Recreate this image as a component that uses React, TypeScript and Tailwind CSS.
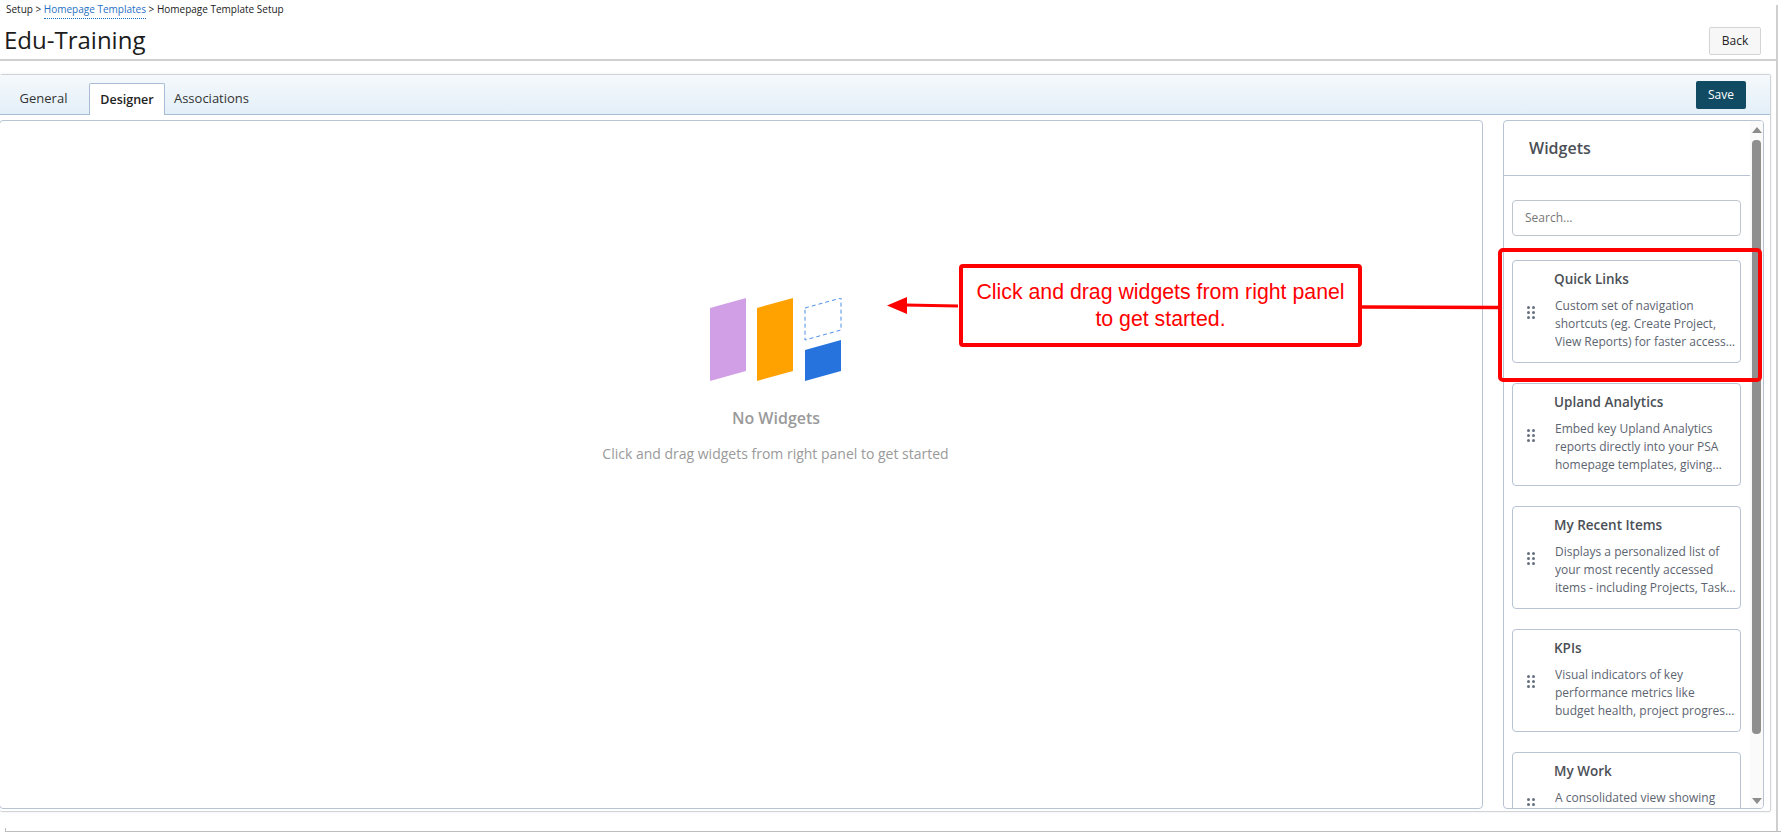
const widgets = [
  {
    title: "Quick Links",
    text: "Custom set of navigation shortcuts (eg. Create Project, View Reports) for faster access to the pages you use most often every day",
  },
  {
    title: "Upland Analytics",
    text: "Embed key Upland Analytics reports directly into your PSA homepage templates, giving users instant access to their data",
  },
  {
    title: "My Recent Items",
    text: "Displays a personalized list of your most recently accessed items - including Projects, Tasks, Issues and other records",
  },
  {
    title: "KPIs",
    text: "Visual indicators of key performance metrics like budget health, project progress and resource utilization over time",
  },
  {
    title: "My Work",
    text: "A consolidated view showing everything assigned to you across your projects and tasks",
  },
];

function DragHandle() {
  return (
    <div className="grid w-[8px] shrink-0 grid-cols-2 gap-x-[2px] gap-y-[2px]">
      {[0, 1, 2, 3, 4, 5].map((i) => (
        <span key={i} className="h-[3px] w-[3px] rounded-full bg-[#66707f]" />
      ))}
    </div>
  );
}

function WidgetCard({ title, text }: { title: string; text: string }) {
  return (
    <div className="flex h-[103px] w-[229px] shrink-0 items-center rounded-[4px] border border-[#b8c4d4] bg-white pl-[14px] pr-[4px]">
      <div className="mt-[2px]">
        <DragHandle />
      </div>
      <div className="ml-[20px] min-w-0 flex-1 self-start pt-[9px]">
        <div className="-ml-px text-[13.5px] leading-[19px] font-semibold text-[#4b4f56]">{title}</div>
        <p className="mt-[8px] line-clamp-3 text-[12px] leading-[18px] text-[#5c6470]">{text}</p>
      </div>
    </div>
  );
}

function EmptyIcon() {
  return (
    <svg width="132" height="84" viewBox="0 0 132 84" className="block">
      <polygon points="0,10 36,0 36,73 0,83" fill="#d09fe6" />
      <polygon points="47,10 83,0 83,73 47,83" fill="#ffa200" />
      <polygon
        points="95,10 131,0 131,32 95,42"
        fill="none"
        stroke="#4f8fe6"
        strokeWidth="1"
        strokeDasharray="4 3"
      />
      <polygon points="95,52 131,42 131,73 95,83" fill="#2673dd" />
    </svg>
  );
}

export default function App() {
  return (
    <div
      className="relative h-[832px] w-[1781px] overflow-hidden bg-white text-[#222]"
      style={{ fontFamily: '"Open Sans", sans-serif' }}
    >
      {/* page frame */}
      <div className="absolute top-[5px] right-[3px] bottom-0 w-[2px] bg-[#cfcfcf]" />
      <div className="absolute bottom-0 left-[5px] h-[4px] w-[1776px] border-b border-l border-[#bdbdbd]" />

      <div className="h-[61px] w-[1776px] border-b-2 border-[#cfcfcf] pr-[15px]">
        <div className="pt-[2px] pl-[6px] text-[10px] leading-[14px] text-[#222]">
          Setup &gt;{" "}
          <span className="border-b border-dotted border-[#1f6fc4] pb-[2px] text-[#1f6fc4]">Homepage Templates</span>{" "}
          &gt; Homepage Template Setup
        </div>
        <div className="flex items-start justify-between">
          <h1 className="mt-[7px] pl-[4px] text-[24px] leading-[34px] font-normal text-[#1c1c1c]">Edu-Training</h1>
          <button className="mt-[11px] h-[28px] w-[52px] rounded-[2px] border border-[#d4d4d4] bg-[#f7f7f7] text-[12px] text-[#222]">
            Back
          </button>
        </div>
      </div>

      <div className="mt-[13px] h-[738px] w-[1771px] rounded-[2px] border-t border-r border-b border-[#d0d4d8] shadow-[0_0_3px_rgba(0,0,0,0.08)]">
        <div className="flex h-[40px] items-end justify-between border-b border-[#a9bcd6] bg-gradient-to-b from-[#f5f9fc] to-[#e3eff8] pr-[24px]">
          <div className="flex items-end pl-[3px] text-[13px]">
            <div className="mr-[5px] flex h-[30px] w-[81px] items-center justify-center pb-[1px] text-[#333]">General</div>
            <div className="-mb-px flex h-[32px] w-[76px] items-center justify-center rounded-t-[2px] border border-b-0 border-[#a9bcd6] bg-white pt-[2px] text-[12.5px] font-semibold text-[#222]">
              Designer
            </div>
            <div className="flex h-[30px] w-[86px] items-center justify-center pb-[1px] pl-[7px] text-[#333]">Associations</div>
          </div>
          <button className="mb-[5px] h-[28px] w-[50px] rounded-[2px] bg-[#114b63] text-[12px] text-white">Save</button>
        </div>

        <div className="flex gap-[20px] pt-[5px] pr-[6px]">
          <div className="-ml-px flex h-[689px] w-[1484px] flex-col items-center rounded-[4px] border border-[#b8c4d4] pt-[177px] pl-[69px]">
            <div className="ml-[1px]">
              <EmptyIcon />
            </div>
            <div className="mt-[25px] pl-[1px] text-[16px] leading-[22px] font-semibold text-[#9a9a9a]">No Widgets</div>
            <div className="mt-[15px] text-[14px] leading-[19px] text-[#9a9a9a]">
              Click and drag widgets from right panel to get started
            </div>
          </div>

          <div className="flex h-[689px] w-[261px] overflow-hidden rounded-[4px] border border-[#b8c4d4]">
            <div className="w-[246px] shrink-0 overflow-hidden">
              <div className="flex h-[55px] items-center border-b border-[#b8c4d4] pl-[25px] text-[16px] font-semibold text-[#4b4f56]">
                Widgets
              </div>
              <div className="pt-[24px] pl-[8px]">
                <div className="flex h-[36px] w-[229px] items-center rounded-[4px] border border-[#bfc5cc] pl-[12px] text-[12px] text-[#777]">
                  Search...
                </div>
                <div className="mt-[24px] flex flex-col gap-[20px]">
                  {widgets.map((w) => (
                    <WidgetCard key={w.title} title={w.title} text={w.text} />
                  ))}
                </div>
              </div>
            </div>
            <div className="flex flex-1 flex-col items-center bg-[#fafafa] pt-[6px]">
              <div className="h-0 w-0 border-x-[5px] border-b-[6px] border-x-transparent border-b-[#8c8c8c]" />
              <div className="mt-[7px] h-[594px] w-[9px] rounded-[4px] bg-[#8f8f8f]" />
              <div className="mt-[64px] h-0 w-0 border-x-[5px] border-t-[6px] border-x-transparent border-t-[#8c8c8c]" />
            </div>
          </div>
        </div>
      </div>

      {/* red annotation over the screenshot */}
      <svg width="1781" height="832" className="pointer-events-none absolute top-0 left-0">
        <polygon points="887,305.5 907,297 907,314" fill="#ff0000" />
        <path d="M905 305 L958 306" stroke="#ff0000" strokeWidth="3" fill="none" />
        <path d="M1361 307 L1498 307.5" stroke="#ff0000" strokeWidth="3.5" fill="none" />
        <rect x="1500" y="250" width="260" height="130" rx="3" fill="none" stroke="#ff0000" strokeWidth="4" />
      </svg>
      <div className="absolute top-[264px] left-[959px] flex h-[83px] w-[403px] items-center justify-center rounded-[4px] border-[4px] border-[#ff0000] bg-white text-center text-[21.3px] leading-[27px] text-[#ff0000]" style={{ fontFamily: '"Liberation Sans", sans-serif' }}>
        <div className="w-[385px]">Click and drag widgets from right panel to get started.</div>
      </div>
    </div>
  );
}
